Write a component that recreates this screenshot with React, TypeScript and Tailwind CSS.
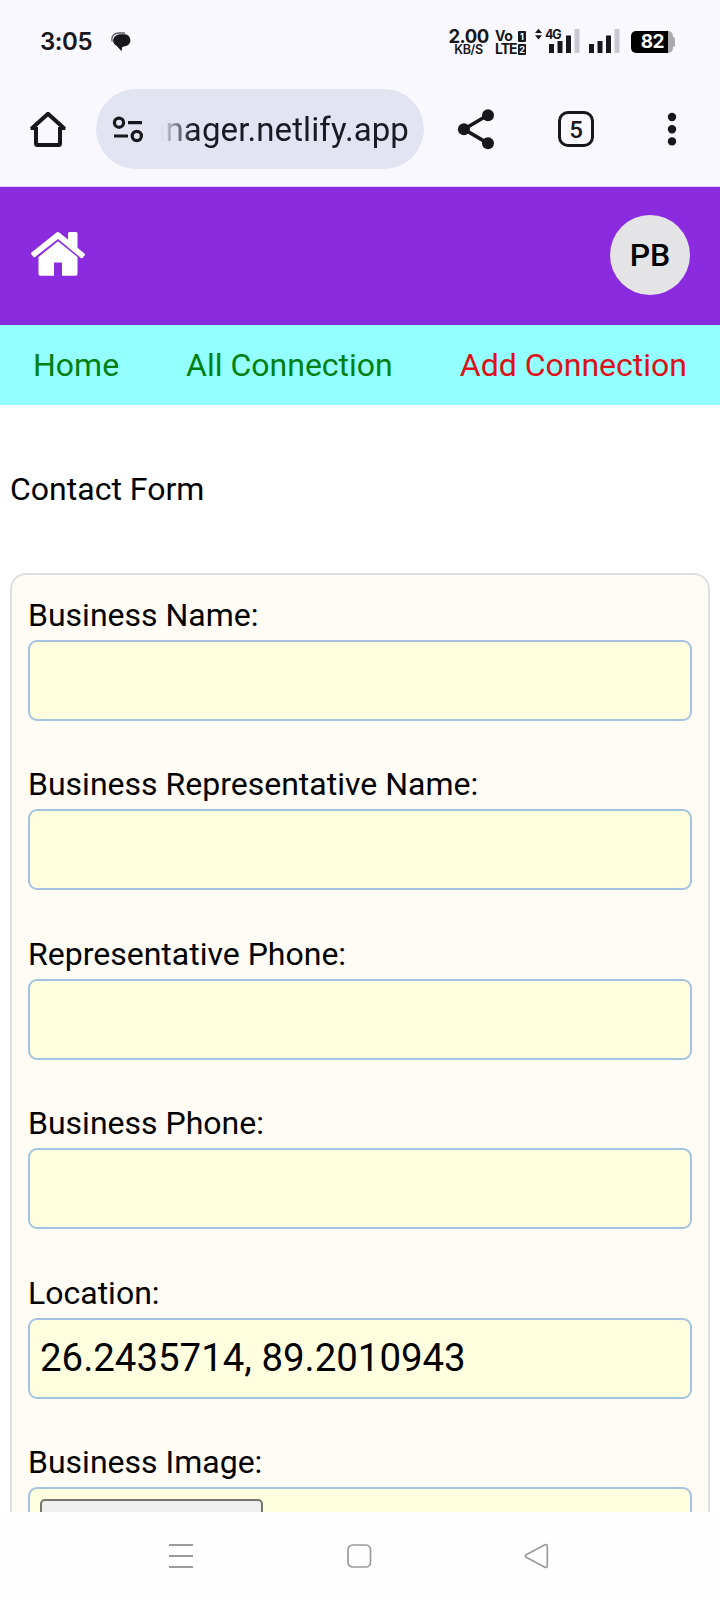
import React from "react";

function StatusBar() {
  return (
    <div className="flex h-[80px] shrink-0 items-start text-[#17171c] font-['Inter',sans-serif]">
      <span className="mt-[30px] ml-[40px] w-[69px] text-[24px] leading-[24px] font-semibold tracking-[-0.4px]">3:05</span>
      <svg className="mt-[32px] ml-[1px]" width="22" height="20" viewBox="0 0 22 20">
        <path d="M2.300 9.500C.5 3.500 5 .8 9.500 1h5.500" fill="none" stroke="#5a5a60" strokeWidth="1.300" />
        <path d="M11 2.300H14C18 2.300 20.400 5 20.400 8.300S18 14.300 14 14.500L12.200 15 11.600 19.300 6.500 13.800C4.200 12.600 3.200 10.700 3.200 8.700 3.200 5 6.500 2.300 11 2.300Z" fill="#17171c" />
      </svg>
      <div className="mt-[27px] ml-[317px] flex w-[39px] flex-col items-center">
        <span className="text-[18.500px] leading-[18px] font-bold tracking-[-0.500px]">2.00</span>
        <span className="text-[12.500px] leading-[9px] font-semibold tracking-[-0.300px]">KB/S</span>
      </div>
      <div className="mt-[30px] ml-[7px] flex w-[32px] flex-col gap-[1px]">
        <div className="flex h-[12px] items-center justify-between">
          <span className="text-[14px] leading-[12px] font-bold tracking-[-0.3px]">Vo</span>
          <span className="mr-[1px] flex h-[11px] w-[8px] items-center justify-center rounded-[1px] bg-[#17171c] text-[9px] leading-[9px] font-bold text-white">1</span>
        </div>
        <div className="flex h-[12px] items-center justify-between">
          <span className="text-[14px] leading-[12px] font-bold tracking-[-1px]">LTE</span>
          <span className="mr-[1px] flex h-[11px] w-[8px] items-center justify-center rounded-[1px] bg-[#17171c] text-[9px] leading-[9px] font-bold text-white">2</span>
        </div>
      </div>
      <div className="relative mt-[28px] ml-[7px] h-[26px] w-[48px]">
        <svg width="48" height="26" viewBox="0 0 48 26">
          <path d="M1 5 4.500 .8 8 5ZM1 7.200 4.500 11.400 8 7.200Z" fill="#17171c" />
          <path d="M15 16h5v9h-5zM23.500 13h5v12h-5zM32 7.500h5V25h-5z" fill="#17171c" />
          <path d="M40.500 1h5v24h-5z" fill="#c9c8d0" />
        </svg>
        <span className="absolute top-[1px] left-[11px] text-[12.5px] leading-[12px] font-bold tracking-[-1.100px]">4G</span>
      </div>
      <svg className="mt-[28px] ml-[6px]" width="34" height="26" viewBox="0 0 34 26">
        <path d="M1 16h5v9H1zM9.500 13h5v12h-5zM18 7.500h5V25h-5z" fill="#17171c" />
        <path d="M26.500 1h5v24h-5z" fill="#c9c8d0" />
      </svg>
      <div className="mt-[31px] ml-[9px] flex items-center">
        <div className="flex h-[22px] w-[37px] items-center justify-end rounded-l-[5px] bg-black pr-[4px]">
          <span className="text-[19px] leading-[22px] font-bold tracking-[-0.5px] text-white">82</span>
        </div>
        <div className="h-[22px] w-[5px] rounded-r-[5px] bg-[#a9a9ae]" />
        <div className="h-[10px] w-[2px] rounded-r-[2px] bg-[#a9a9ae]" />
      </div>
    </div>
  );
}

function BrowserBar() {
  return (
    <div className="flex h-[107px] shrink-0 items-start border-b border-[#dcd0f0] pt-[9px]">
      <svg className="mt-[20px] ml-[28px]" width="40" height="40" viewBox="0 0 40 40" fill="none" stroke="#17171c" strokeWidth="4" strokeLinejoin="round">
        <path d="M2.500 19.500H7.500M32.500 19.500H37.500" strokeWidth="3" />
        <path d="M3.500 19.800 20 4.800 36.500 19.800" />
        <path d="M8 18v16.500q0 1.500 1.500 1.500h21q1.500 0 1.500-1.500V18" />
      </svg>
      <div className="ml-[28px] flex h-[80px] w-[328px] items-center rounded-full bg-[#e3e4f2]">
        <svg className="ml-[16px] shrink-0" width="32" height="28" viewBox="0 0 32 28" fill="none" stroke="#17171c" strokeWidth="3.200">
          <circle cx="7" cy="7.700" r="4.600" />
          <path d="M16 7.700h14M2 21h14" />
          <circle cx="24.800" cy="21" r="4.600" />
        </svg>
        <div className="mt-[2px] ml-[17px] flex w-[248px] justify-end overflow-hidden [mask-image:linear-gradient(to_right,transparent,black_32px)]">
          <span className="text-[33px] leading-[48px] tracking-[0.1px] text-[#1a1a24] font-['Roboto',sans-serif]">manager.netlify.app</span>
        </div>
      </div>
      <svg className="mt-[19px] ml-[33px]" width="38" height="42" viewBox="0 0 38 42" fill="#17171c">
        <path d="M31 7 7 21.200 31 35.400" fill="none" stroke="#17171c" strokeWidth="3.600" />
        <circle cx="31" cy="7.200" r="6" />
        <circle cx="6.900" cy="21.200" r="6" />
        <circle cx="31" cy="35.300" r="6" />
      </svg>
      <div className="mt-[22px] ml-[63px] flex h-[36px] w-[36px] items-center justify-center rounded-[10px] border-[3.500px] border-[#17171c] pt-[1px]">
        <span className="text-[24px] leading-none font-medium text-[#17171c] font-['Roboto',sans-serif]">5</span>
      </div>
      <svg className="mt-[23px] ml-[73px]" width="10" height="34" viewBox="0 0 10 34" fill="#17171c">
        <circle cx="5" cy="5" r="4.200" />
        <circle cx="5" cy="17.200" r="4.200" />
        <circle cx="5" cy="29.400" r="4.200" />
      </svg>
    </div>
  );
}

function SiteHeader() {
  return (
    <header className="flex h-[138px] shrink-0 items-center justify-between bg-[#8a2be0] px-[30px]">
      <svg className="mt-[-5px]" width="56" height="46" viewBox="0 0 56 46" fill="white">
        <path d="M26.500 1.600q1.300-1 2.600 0L38 8.500V2.500Q38 1 39.500 1H46q1.500 0 1.500 1.500v14.200l7 5.800q1 .8.200 1.800l-2 2.400q-.8 1-1.900.2L28 8 5.200 25.900q-1.100.8-1.900-.2l-2-2.400q-.8-1 .2-1.800Z" />
        <path d="M28 10.200 47.500 26v17q0 1.700-1.700 1.700H32V31.500h-8v13.200H10.200q-1.700 0-1.700-1.700V26Z" />
      </svg>
      <div className="mt-[-2px] flex h-[80px] w-[80px] items-center justify-center rounded-full bg-[#e4e4e7] text-[32px] font-medium text-black">PB</div>
    </header>
  );
}

function Field({ label, children }: { label: string; children?: React.ReactNode }) {
  return (
    <div className="flex h-[169.600px] shrink-0 flex-col">
      <label className="h-[48px] text-[32px] leading-[46px] text-black">{label}</label>
      <div className="flex h-[81px] items-center rounded-[9px] border-2 border-[#a3c3df] bg-[#ffffdf] px-[10px]">{children}</div>
    </div>
  );
}

export default function App() {
  return (
    <div className="flex h-[1600px] w-[720px] flex-col overflow-hidden bg-[#f9f8ff] font-['Roboto',sans-serif]">
      <StatusBar />
      <BrowserBar />
      <div className="flex h-[1325px] shrink-0 flex-col overflow-hidden bg-white">
        <SiteHeader />
        <nav className="flex h-[80px] shrink-0 items-center justify-between bg-[#93ffff] px-[33px] text-[32px] text-[#008013]">
          <a>Home</a>
          <a>All Connection</a>
          <a className="text-[#dd1218]">Add Connection</a>
        </nav>
        <h1 className="mt-[60px] ml-[10px] h-[48px] shrink-0 text-[32px] leading-[48px] text-black">Contact Form</h1>
        <form className="mx-[10px] mt-[60px] flex h-[1100px] shrink-0 flex-col rounded-[16px] border-2 border-[#dfe0e2] bg-[#fffcf5] px-[16px] pt-[16.500px]">
          <Field label="Business Name:" />
          <Field label="Business Representative Name:" />
          <Field label="Representative Phone:" />
          <Field label="Business Phone:" />
          <Field label="Location:">
            <span className="text-[38.400px] leading-none text-black">26.2435714, 89.2010943</span>
          </Field>
          <Field label="Business Image:">
            <div className="mb-[-2px] h-[59px] w-[223px] rounded-[5px] border-2 border-[#76766e] bg-[#efefef]" />
          </Field>
        </form>
      </div>
      <div className="flex h-[88px] shrink-0 items-start bg-[#fefefe] pt-[31px]">
        <svg className="ml-[168px]" width="26" height="26" viewBox="0 0 26 26" stroke="#9b9b9b" strokeWidth="1.800">
          <path d="M1 2h24M1 13h24M1 24h24" />
        </svg>
        <svg className="ml-[152px]" width="26" height="26" viewBox="0 0 26 26" fill="none" stroke="#9b9b9b" strokeWidth="1.700">
          <rect x="2" y="2" width="22.500" height="22" rx="4.500" />
        </svg>
        <svg className="ml-[152px]" width="26" height="26" viewBox="0 0 26 26" fill="none" stroke="#9b9b9b" strokeWidth="1.700" strokeLinejoin="round">
          <path d="M2.200 11.700 20.800 1.800Q23.300 1 23.300 3.200V22.800Q23.300 25 20.800 24.200L2.200 14.300Q.4 13 2.200 11.700Z" />
        </svg>
      </div>
    </div>
  );
}
